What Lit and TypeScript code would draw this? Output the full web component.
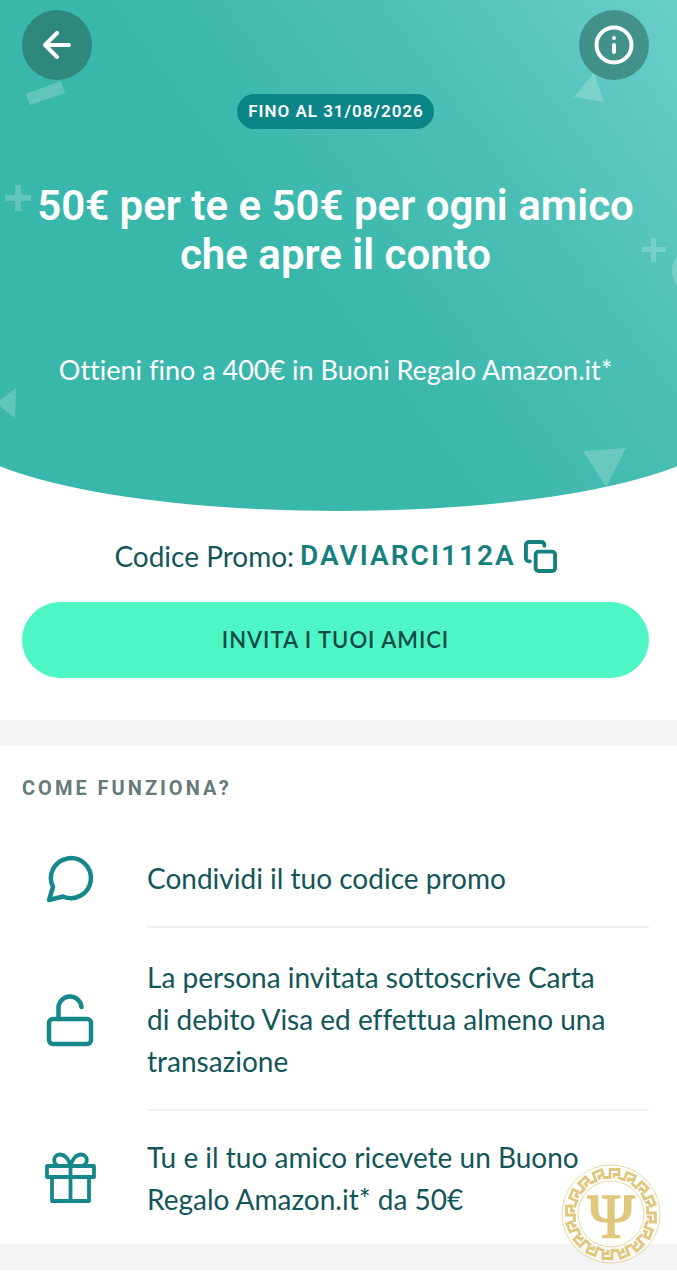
import { LitElement, css, html, svg } from 'lit';
import { customElement, property } from 'lit/decorators.js';

const icons = {
  back: svg`<path d="M26 14H2M14 2 2 14l12 12" />`,
  chat: svg`<path d="M5 48 9 35A20 20 0 1 1 19 44.500Z" />`,
  unlock: svg`
    <rect x="5" y="26" width="42" height="25" rx="4" />
    <path d="M14.500 26V16A11.500 11.500 0 0 1 37.500 14" />
  `,
  gift: svg`
    <rect x="3" y="15" width="47" height="11" />
    <path d="M8 26v24h37V26M26.500 15v35M26.500 15H15C8 13 9 3.500 16 3.500c5 0 9 5 10.500 11.500ZM26.500 15H38c7-2 6-11.500-1-11.500-5 0-9 5-10.500 11.500Z" />
  `,
};

/**
 * One step of the "Come funziona?" list.
 *
 * @slot - The text of the step
 */
@customElement('promo-step')
export class PromoStep extends LitElement {
  @property() icon: 'chat' | 'unlock' | 'gift' = 'chat';

  render() {
    return html`
      <svg class="icon ${this.icon}" viewBox="0 0 52 54" aria-hidden="true">${icons[this.icon]}</svg>
      <p class="text"><slot></slot></p>
    `;
  }

  static styles = css`
    :host {
      display: flex;
      align-items: stretch;
    }

    .icon {
      flex: none;
      align-self: center;
      width: 52px;
      height: 54px;
      margin: 0 51px 0 44px;
      fill: none;
      stroke: #16888b;
      stroke-width: 4.5;
      stroke-linecap: round;
      stroke-linejoin: round;
    }

    .gift {
      stroke-width: 3.8;
    }

    .text {
      flex: 1;
      margin: 0 28px 0 0;
      padding: 28px 32px 27px 0;
      border-bottom: 2px solid #efefef;
    }

    :host(:last-of-type) .text {
      border-bottom: 0;
      padding: 25px 32px 24px 0;
    }
  `;
}

/**
 * Round gold seal with a Greek key border.
 */
@customElement('psi-seal')
export class PsiSeal extends LitElement {
  render() {
    return html`
      <svg viewBox="-50 -50 100 100" role="img" aria-label="Psi">
        <circle class="disc" r="49" />
        <circle class="ring" r="49" />
        <circle class="ring" r="33" />
        ${[...new Array(16)].map(
          (_, i) => svg`<path class="key" transform="rotate(${i * 22.5})" d="M-8 -36.500H-1V-44.500H8V-39.500H3V-36" />`
        )}
        <text class="psi" y="24" text-anchor="middle">Ψ</text>
      </svg>
    `;
  }

  static styles = css`
    :host {
      display: block;
      width: 100px;
      height: 100px;
    }

    .disc {
      fill: #fff;
      fill-opacity: 0.3;
    }

    .ring {
      fill: none;
      stroke: #e0c77e;
      stroke-width: 1;
      opacity: 0.7;
    }

    .key {
      fill: none;
      stroke: #e0c77e;
      stroke-width: 2.8;
    }

    .psi {
      fill: #e0c77e;
      stroke: #e0c77e;
      stroke-width: 1.5;
      font: 64px 'Liberation Serif', serif;
    }
  `;
}

@customElement('app-root')
export class AppRoot extends LitElement {
  @property() code = 'DAVIARCI112A';

  private _copy = () => {
    navigator.clipboard?.writeText(this.code);
  };

  render() {
    return html`
      <header class="hero">
        <svg class="confetti" viewBox="0 0 677 511" preserveAspectRatio="xMidYMin slice" aria-hidden="true">
          <path d="M26 94 61 81l4 12-35 12Z" />
          <path d="M594 73l10 29-30-5Z" />
          <path d="M15 185h6v10h10v6H21v10h-6v-10H5v-6h10Z" />
          <path d="M651 238h5v9h10v5h-10v10h-5v-10h-9v-5h9Z" />
          <path d="M-4 403l20-15-1 30Z" />
          <path d="M583 451l43-3-20 39Z" />
          <ellipse cx="684" cy="271" rx="12" ry="18" />
        </svg>
        <nav class="bar">
          <button class="round" aria-label="Indietro">
            <svg width="28" height="28" viewBox="0 0 28 28">${icons.back}</svg>
          </button>
          <button class="round" aria-label="Informazioni">
            <svg width="40" height="40" viewBox="0 0 40 40">
              <circle cx="20" cy="20" r="17.500" />
              <path d="M20 20v7M20 13v0" />
            </svg>
          </button>
        </nav>
        <span class="badge">FINO AL 31/08/2026</span>
        <h1 class="title">50€ per te e 50€ per ogni amico che apre il conto</h1>
        <p class="subtitle">Ottieni fino a 400€ in Buoni Regalo Amazon.it*</p>
      </header>

      <section class="promo">
        <div class="code-row">
          <span>Codice Promo:</span>
          <strong class="code">${this.code}</strong>
          <button class="copy" aria-label="Copia codice" @click="${this._copy}">
            <svg width="33" height="33" viewBox="0 0 34 34">
              <path d="M6 22H5a3 3 0 0 1-3-3V5a3 3 0 0 1 3-3h13a3 3 0 0 1 3 3v1" />
              <rect x="12" y="12" width="20" height="20" rx="3" />
            </svg>
          </button>
        </div>
        <button class="invite">INVITA I TUOI AMICI</button>
      </section>

      <section class="how">
        <h2 class="heading">COME FUNZIONA?</h2>
        <promo-step icon="chat">Condividi il tuo codice promo</promo-step>
        <promo-step icon="unlock">
          La persona invitata sottoscrive Carta di debito Visa ed effettua almeno una transazione
        </promo-step>
        <promo-step icon="gift">Tu e il tuo amico ricevete un Buono Regalo Amazon.it* da 50€</promo-step>
      </section>

      <psi-seal class="seal"></psi-seal>
    `;
  }

  static styles = css`
    :host {
      display: block;
      background: #fff;
      color: #12555a;
      font: 28px/42px Lato, sans-serif;
      font-variant-ligatures: none;
    }

    button {
      padding: 0;
      border: 0;
      background: none;
      cursor: pointer;
    }

    button svg {
      display: block;
      fill: none;
      stroke: currentColor;
      stroke-width: 4;
      stroke-linecap: round;
      stroke-linejoin: round;
    }

    .hero {
      position: relative;
      z-index: 0;
      display: flex;
      flex-direction: column;
      align-items: center;
      overflow: hidden;
      padding: 10px 28px 120px 22px;
      color: #fff;
      text-align: center;
    }

    /* wider than the page, so only the middle of the curve shows */
    .hero::before {
      content: '';
      position: absolute;
      z-index: -2;
      inset: 0 -7%;
      border-radius: 0 0 50% 50% / 0 0 86px 86px;
      background: linear-gradient(53deg, #3ab7ab 46%, #4abfb5 68%, #6fd0cc);
    }

    .confetti {
      position: absolute;
      z-index: -1;
      inset: 0;
      width: 100%;
      height: 100%;
      fill: #fff;
      opacity: 0.2;
    }

    .bar {
      align-self: stretch;
      display: flex;
      justify-content: space-between;
    }

    .round {
      display: grid;
      place-items: center;
      width: 70px;
      height: 70px;
      border-radius: 50%;
      background: rgb(34 90 82 / 0.5);
      color: #fff;
    }

    .badge {
      margin-top: 14px;
      padding: 0 10px 0 11px;
      border-radius: 18px;
      background: #0b8588;
      font: 600 17px/35px Roboto, sans-serif;
      letter-spacing: 1px;
    }

    .title {
      margin: 52px 0 0;
      font: 600 42px/49px Roboto, sans-serif;
    }

    .subtitle {
      margin: 70px 0 0;
      font-size: 27px;
    }

    .promo {
      padding: 24px 28px 42px 22px;
      border-bottom: 26px solid #f4f4f4;
    }

    .code-row {
      display: flex;
      justify-content: center;
      align-items: center;
      gap: 6px;
    }

    .code {
      color: #16807f;
      font: 600 28px/42px Roboto, sans-serif;
      letter-spacing: 2px;
    }

    .copy {
      margin-left: 2px;
      color: #16807f;
    }

    .invite {
      width: 100%;
      margin-top: 25px;
      border-radius: 38px;
      background: #4ff6c5;
      color: #0d4a48;
      font: 600 22px/76px Lato, sans-serif;
      letter-spacing: 1px;
    }

    .how {
      border-bottom: 26px solid #f4f4f4;
    }

    .heading {
      margin: 0;
      padding: 30px 22px 29px;
      color: #66797b;
      font: 700 20px/24px Roboto, sans-serif;
      letter-spacing: 3px;
    }

    .seal {
      position: fixed;
      right: 16px;
      bottom: 16px;
    }
  `;
}

declare global {
  interface HTMLElementTagNameMap {
    'app-root': AppRoot;
    'promo-step': PromoStep;
    'psi-seal': PsiSeal;
  }
}
